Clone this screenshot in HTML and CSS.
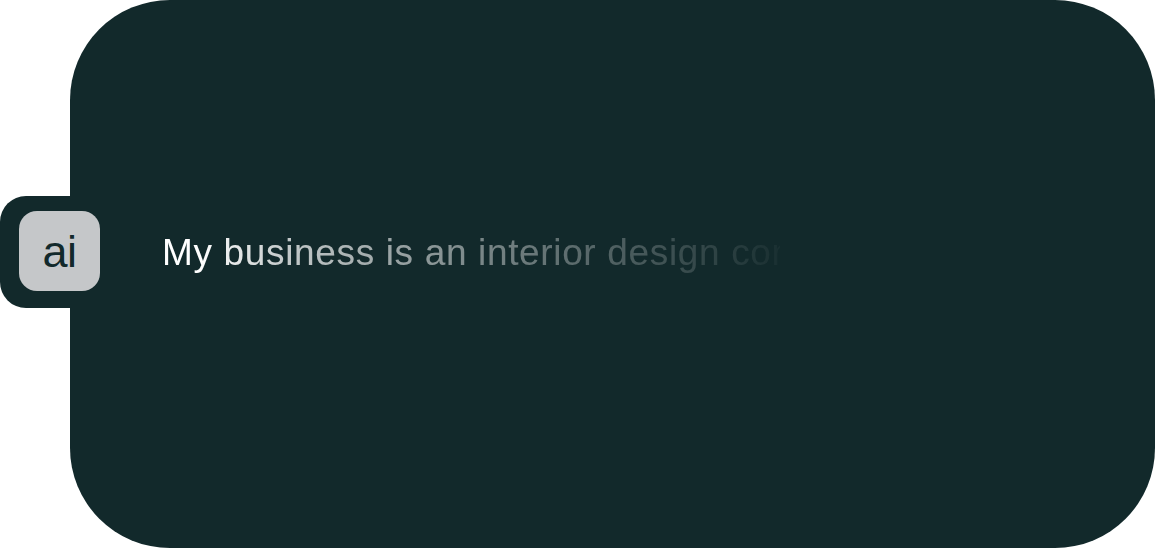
FILE: index.html
```html
<!DOCTYPE html>
<html lang="en">
<head>
<meta charset="utf-8">
<title>AI prompt</title>
<link rel="stylesheet" href="styles.css">
</head>
<body>
<main class="card">
  <div class="row">
    <div class="tab">
      <div class="badge">ai</div>
    </div>
    <p class="prompt">My business is an interior design company</p>
  </div>
</main>
</body>
</html>
```

FILE: styles.css
```css
html, body {
  margin: 0;
  padding: 0;
  background: #ffffff;
}
body {
  width: 1155px;
  height: 548px;
  overflow: hidden;
  font-family: "Liberation Sans", Arial, sans-serif;
}
.card {
  box-sizing: border-box;
  margin-left: 70px;
  width: 1085px;
  height: 548px;
  background: #12292b;
  border-radius: 100px;
  padding-top: 196px;
}
.row {
  display: flex;
  align-items: center;
  margin-left: -70px;
}
.tab {
  box-sizing: border-box;
  width: 100px;
  height: 112px;
  padding: 15px 0 17px 19px;
  background: #12292b;
  border-radius: 26px 0 0 26px;
  flex-shrink: 0;
}
.badge {
  width: 81px;
  height: 80px;
  border-radius: 18px;
  background: #c5c7c9;
  color: #12292b;
  font-size: 45px;
  line-height: 82px;
  text-align: center;
  letter-spacing: -0.5px;
}
.prompt {
  margin: 2px 0 0 62px;
  width: 618px;
  white-space: nowrap;
  overflow: hidden;
  font-size: 37px;
  letter-spacing: 0.65px;
  line-height: 42px;
  color: #ffffff;
  -webkit-mask-image: linear-gradient(to right, #000 0%, #000 6%, rgba(0,0,0,0.75) 20%, rgba(0,0,0,0.45) 50%, rgba(0,0,0,0.22) 78%, rgba(0,0,0,0.1) 92%, rgba(0,0,0,0.03) 100%);
  mask-image: linear-gradient(to right, #000 0%, #000 6%, rgba(0,0,0,0.75) 20%, rgba(0,0,0,0.45) 50%, rgba(0,0,0,0.22) 78%, rgba(0,0,0,0.1) 92%, rgba(0,0,0,0.03) 100%);
}
```
